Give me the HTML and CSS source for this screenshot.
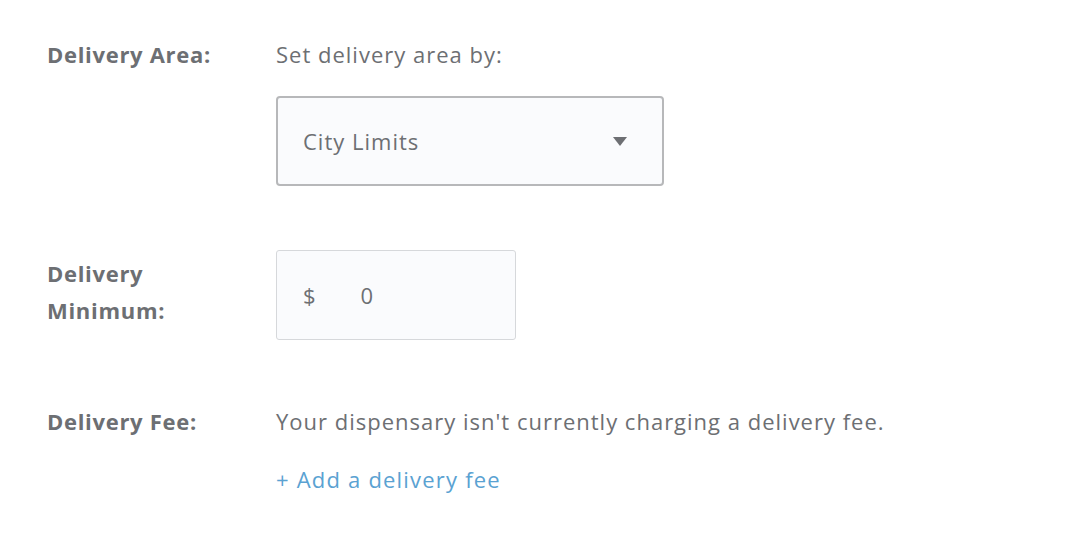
FILE: index.html
```html
<!DOCTYPE html>
<html>
<head>
<meta charset="utf-8">
<link rel="stylesheet" href="styles.css">
</head>
<body>
<div class="form">
  <div class="row row-area">
    <div class="label">Delivery Area:</div>
    <div class="field">
      <div class="hint">Set delivery area by:</div>
      <div class="select">
        <span>City Limits</span>
        <span class="caret"></span>
      </div>
    </div>
  </div>
  <div class="row row-min">
    <div class="label label-wrap">Delivery Minimum:</div>
    <div class="field">
      <div class="money">
        <span class="currency">$</span>
        <span class="amount">0</span>
      </div>
    </div>
  </div>
  <div class="row row-fee">
    <div class="label">Delivery Fee:</div>
    <div class="field">
      <div class="hint">Your dispensary isn't currently charging a delivery fee.</div>
      <a class="add-link" href="#">+ Add a delivery fee</a>
    </div>
  </div>
</div>
</body>
</html>
```
FILE: styles.css
```css
html, body {
  margin: 0;
  padding: 0;
  background: #ffffff;
}
body {
  font-family: "Open Sans", "Lato", sans-serif;
  font-size: 22px;
  letter-spacing: 1px;
  color: #6d6f73;
}
.form {
  padding: 39px 0 0 47px;
}
.row {
  display: flex;
}
.label {
  width: 229px;
  flex: none;
  font-weight: 700;
  line-height: 30px;
  letter-spacing: 0.7px;
  color: #6d6f73;
}
.label-wrap {
  width: 150px;
  margin-right: 79px;
  line-height: 37px;
  padding-bottom: 6px;
}
.hint {
  line-height: 30px;
}
.select {
  margin-top: 27px;
  width: 388px;
  height: 90px;
  box-sizing: border-box;
  border: 2px solid #b7b8ba;
  border-radius: 4px;
  background: #fafbfd;
  display: flex;
  align-items: center;
  justify-content: space-between;
  padding: 0 35px 0 25px;
}
.caret {
  width: 0;
  height: 0;
  border-left: 7.5px solid transparent;
  border-right: 7.5px solid transparent;
  border-top: 9px solid #6d6f73;
}
.row-min {
  margin-top: 64px;
  align-items: center;
}
.money {
  width: 240px;
  height: 90px;
  box-sizing: border-box;
  border: 1.5px solid #d6d8db;
  border-radius: 3px;
  background: #fafbfd;
  display: flex;
  align-items: center;
  padding-left: 26px;
}
.amount {
  margin-left: 44px;
}
.row-fee {
  margin-top: 66px;
}
.add-link {
  display: block;
  margin-top: 28px;
  line-height: 30px;
  letter-spacing: 1.2px;
  color: #5aa2d2;
  text-decoration: none;
}
```
